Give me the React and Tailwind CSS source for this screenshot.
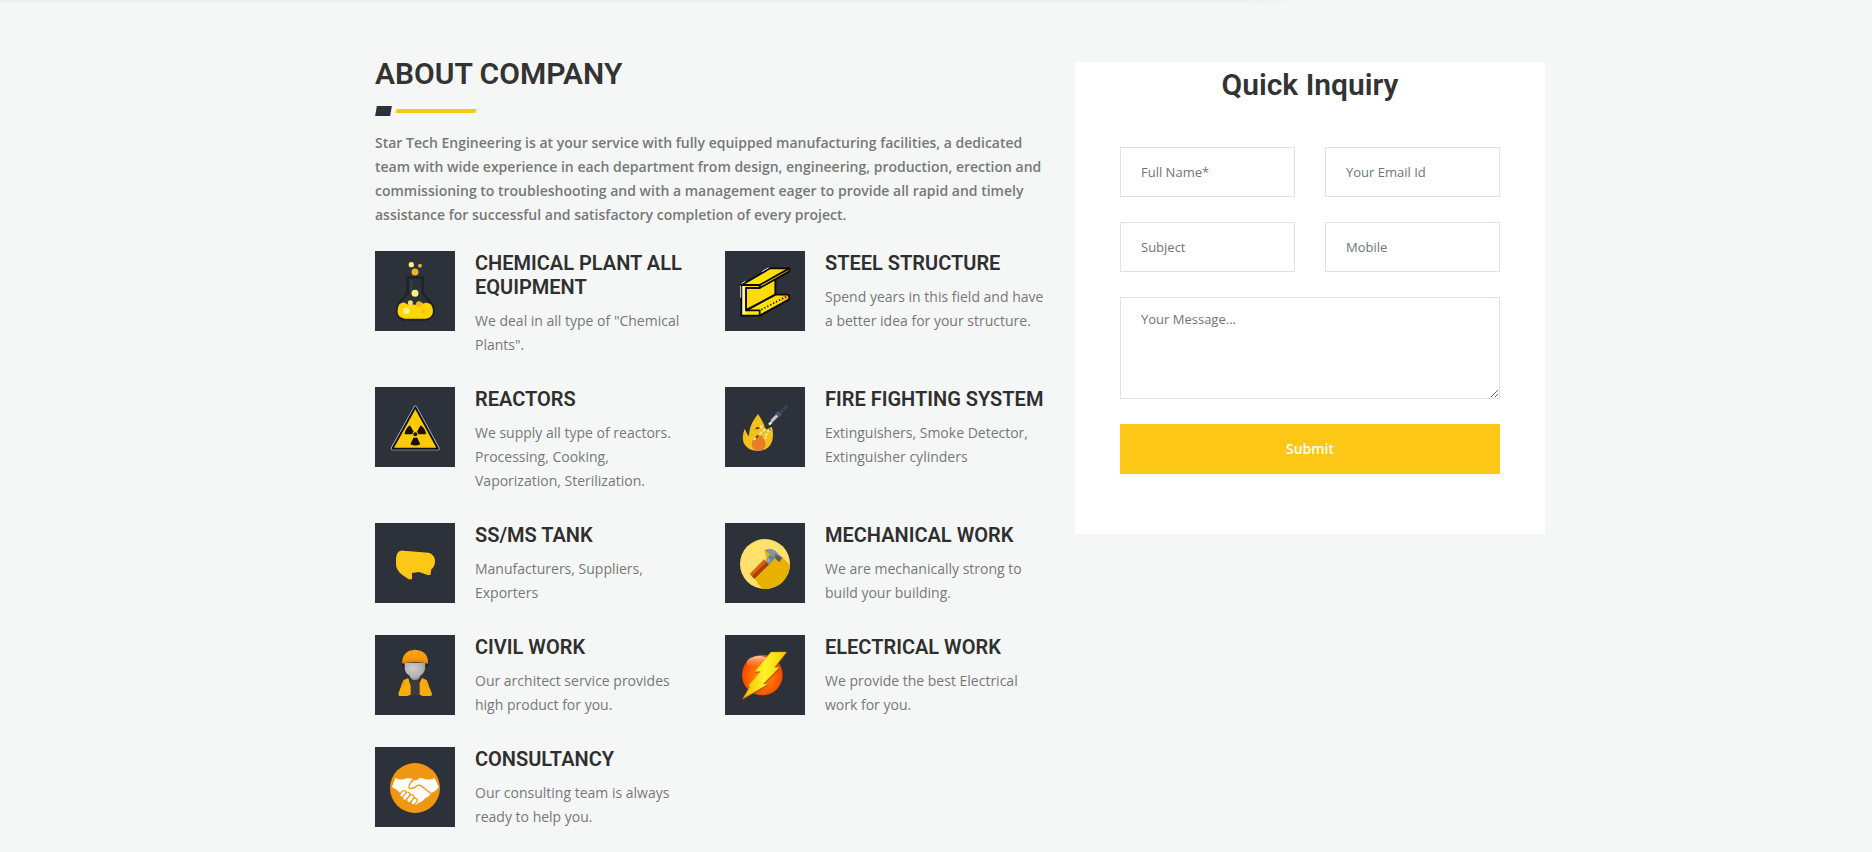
const Flask = () => (
  <svg viewBox="15 18 240 240" className="size-20">
    <path d="M113 98V144L84 180C76 200 82 222 104 224H166C190 222 196 200 188 180L158 144V98" fill="#2d3139" stroke="#202227" strokeWidth="7" />
    <path d="M108 98H163" stroke="#202227" strokeWidth="7" />
    <path d="M124 106V144" stroke="#3d4046" strokeWidth="5" />
    <path d="M88 178Q98 170 106 174Q114 182 124 178Q136 180 144 178Q152 168 160 176Q170 170 182 178C190 190 192 206 182 215Q174 221 166 221H104Q90 219 84 208Q80 194 88 178Z" fill="#fed500" />
    <circle cx="124" cy="59" r="8" fill="#fdee82" />
    <circle cx="150" cy="62" r="6" fill="#e9a62c" />
    <circle cx="135" cy="81" r="10.500" fill="#f2b32c" />
    <circle cx="135" cy="145" r="10.500" fill="#fdee82" />
    <circle cx="121" cy="173" r="7.500" fill="#f4e070" />
    <circle cx="147" cy="178" r="9" fill="#f2b32c" />
    <circle cx="109" cy="198" r="10" fill="#fdf08a" />
    <circle cx="160" cy="200" r="5" fill="#eeb718" />
  </svg>
);

const Beam = () => (
  <svg viewBox="15 18 240 240" className="size-20">
    <defs>
      <linearGradient id="beam" x1="0" x2="1" y1="0" y2="0">
        <stop offset="0" stopColor="#fff" />
        <stop offset=".12" stopColor="#ffe70d" />
        <stop offset=".8" stopColor="#fddb0a" />
        <stop offset="1" stopColor="#fb9a1c" />
      </linearGradient>
    </defs>
    <g stroke="#0b0b0b" strokeWidth="5.500" strokeLinejoin="round">
      <path d="M78 129L166 100V152L78 196Z" fill="#fddb0a" />
      <path d="M64 121L150 70H208V79L119 129V120H64Z" fill="url(#beam)" />
      <path d="M64 120H119V129H78V196L166 149H204Q209 152 208 163L119 212H64Z" fill="url(#beam)" />
      <path d="M119 212V196H78M119 120L208 70M78 196L166 149" fill="none" />
      <path d="M124 194L198 155" fill="none" strokeWidth="5" strokeDasharray="4 6" />
    </g>
    <path d="M62 122V158M65 116L76 109M126 80L146 68" stroke="#fff" strokeWidth="2.500" fill="none" />
  </svg>
);

const Radiation = () => (
  <svg viewBox="15 15 240 240" className="size-20">
    <path d="M136 76L204 200H67Z" fill="#fecb00" stroke="#d7d7d9" strokeWidth="10" strokeLinejoin="round" />
    <path d="M136 76L204 200H67Z" fill="#fecb00" stroke="#111" strokeWidth="6" strokeLinejoin="round" />
    <g fill="#141200">
      <circle cx="136" cy="157" r="6" />
      <path d="M127 157H104Q105 140 120 130L131 149Q127 152 127 157Z" />
      <path d="M145 157H168Q167 140 152 130L141 149Q145 152 145 157Z" />
      <path d="M131 166L121 187Q136 194 151 187L141 166Q136 169 131 166Z" />
    </g>
  </svg>
);

const Fire = () => (
  <svg viewBox="15 15 240 240" className="size-20">
    <path d="M114 96C128 116 134 132 138 142L156 135C162 158 160 182 145 196C126 212 92 210 78 193C64 178 68 157 74 141C79 149 82 160 87 162C88 132 100 115 114 96Z" fill="#f2c219" />
    <circle cx="116" cy="186" r="21" fill="#e67e25" />
    <path d="M106 170L113 161H128V172Z" fill="#e67e25" />
    <path d="M107 140L118 137M107 168L115 160" stroke="#4c4020" strokeWidth="5" />
    <path d="M133 133L152 145M133 124L151 133M146 120L139 143" stroke="#3c361d" strokeWidth="4" strokeDasharray="5 3" />
    <path d="M119 136L130 131M119 157L137 139M137 162L148 142M101 174L109 166M135 170L139 165" stroke="#eee9e4" strokeWidth="5" strokeDasharray="9 4" />
    <path d="M147 128L155 120" stroke="#f2f4f5" strokeWidth="7" />
    <path d="M154 118L172 100" stroke="#c3c6ca" strokeWidth="9" />
    <path d="M180 94L199 74" stroke="#34424f" strokeWidth="11" strokeLinecap="round" />
    <path d="M169 91L182 101" stroke="#4d5876" strokeWidth="11" />
  </svg>
);

const Tank = () => (
  <svg viewBox="15 15 240 240" className="size-20">
    <path d="M88 100Q94 97 101 98L176 104Q183 104 188 112Q196 119 195 133Q194 147 184 154L181 171H174L147 162L126 165V184H116L97 171Q80 158 78 141V120Q80 105 88 100Z" fill="#fcc716" />
  </svg>
);

const Hammer = () => (
  <svg viewBox="15 15 240 240" className="size-20">
    <defs>
      <clipPath id="disc"><circle cx="135" cy="138" r="75" /></clipPath>
    </defs>
    <circle cx="135" cy="138" r="75" fill="#ffe16b" />
    <path d="M102 180L142 134L134 97Q150 90 166 103L186 118L260 190L170 270Z" fill="#e8b100" clipPath="url(#disc)" />
    <path d="M132 97H152L160 108L146 112Q144 102 132 97Z" fill="#e8b100" />
    <path d="M132 124L148 139L103 182L89 168Z" fill="#dc6209" />
    <path d="M148 139L103 182L96 175L140 131Z" fill="#a83f05" />
    <path d="M152 108L170 115L145 141L137 127Z" fill="#6d8393" />
    <path d="M132 98Q148 87 166 98L187 119L178 132L168 123L170 116L160 114L151 113Q148 101 132 98Z" fill="#8496a0" />
    <path d="M166 105L171 111L175 113L187 119L178 132L166 122Z" fill="#635a5d" />
    <path d="M137 127L145 119L152 127L145 136Z" fill="#93a5b1" />
  </svg>
);

const Worker = () => (
  <svg viewBox="15 15 240 240" className="size-20">
    <defs>
      <radialGradient id="face" cx=".4" cy=".35" r=".75">
        <stop offset="0" stopColor="#cfcecd" />
        <stop offset=".6" stopColor="#b5b4b4" />
        <stop offset="1" stopColor="#858585" />
      </radialGradient>
      <linearGradient id="helmet" x1="0" x2="0" y1="0" y2="1">
        <stop offset="0" stopColor="#fdab16" />
        <stop offset="1" stopColor="#f18c08" />
      </linearGradient>
    </defs>
    <path d="M119 148H149L153 196H119Z" fill="#3c3c3d" />
    <path d="M97 94H173V109L165 116H104L97 107Z" fill="#17191d" />
    <path d="M104 98H166V114Q162 132 151 137Q149 149 135 150Q121 149 119 137Q105 130 104 114Z" fill="url(#face)" />
    <path d="M97 101C95 78 109 63 126 61Q135 57 144 61C164 63 176 80 174 101Q158 96 135 96Q112 96 97 101Z" fill="url(#helmet)" />
    <path d="M126 61L123 78M144 61L148 78" stroke="#d77c06" strokeWidth="1.500" />
    <path d="M97 97Q135 88 174 97" fill="none" stroke="#ce7908" strokeWidth="2" />
    <path d="M101 150L115 144L119 159L122 168V194L112 198H87L85 191L92 172Z" fill="#fbac0a" />
    <path d="M170 150L156 144L149 159V194L158 198H184L186 191L178 172Z" fill="#fbac0a" />
    <path d="M94 172V164L101 151L104 150V169Z" fill="#f0a00c" />
    <path d="M176 172V164L170 151L166 150V169Z" fill="#f0a00c" />
  </svg>
);

const Bolt = () => (
  <svg viewBox="15 15 240 240" className="size-20">
    <defs>
      <radialGradient id="orb" cx=".5" cy=".55" r=".55">
        <stop offset="0" stopColor="#ff9a00" />
        <stop offset=".55" stopColor="#ff6900" />
        <stop offset="1" stopColor="#f33f00" />
      </radialGradient>
      <linearGradient id="gloss" x1="0" x2="0" y1="0" y2="1">
        <stop offset="0" stopColor="#ffe0c8" stopOpacity=".9" />
        <stop offset="1" stopColor="#ff7a20" stopOpacity="0" />
      </linearGradient>
      <linearGradient id="bolt" x1="0" x2="1" y1="0" y2="0">
        <stop offset="0" stopColor="#f5b800" />
        <stop offset=".5" stopColor="#fff32a" />
        <stop offset="1" stopColor="#f5cf00" />
      </linearGradient>
    </defs>
    <circle cx="127" cy="135" r="61" fill="url(#orb)" />
    <ellipse cx="118" cy="98" rx="38" ry="20" fill="url(#gloss)" />
    <path d="M156 69H202L166 115H181L132 165H147L70 210L92 172H85L121 128H105Z" fill="#873300" opacity=".55" />
    <path d="M153 66H200L164 112H179L130 162H145L68 207L90 169H83L120 125H103Z" fill="url(#bolt)" stroke="#ce7d00" strokeWidth="1.500" />
  </svg>
);

const Handshake = () => (
  <svg viewBox="15 15 240 240" className="size-20">
    <circle cx="135" cy="138" r="75" fill="#f09712" />
    <path d="M76 108Q92 117 112 108Q124 109 135 113Q150 105 162 110Q180 116 194 108L206 134Q198 148 183 153Q178 165 166 168Q156 181 146 182Q136 192 126 187L92 156Q88 147 66 135Z" fill="#fff" />
    <path d="M144 111Q131 110 123 120Q115 134 117 138Q124 143 139 133Q145 127 153 131L181 153" fill="none" stroke="#f09712" strokeWidth="4" strokeLinecap="round" />
    <g fill="#fff" stroke="#f09712" strokeWidth="3.500">
      <rect x="92" y="145" width="14" height="22" rx="7" transform="rotate(40 99 156)" />
      <rect x="102" y="149" width="14" height="27" rx="7" transform="rotate(40 109 162)" />
      <rect x="114" y="157" width="14" height="26" rx="7" transform="rotate(40 121 170)" />
      <rect x="126" y="167" width="13" height="22" rx="6.500" transform="rotate(35 132 178)" />
    </g>
  </svg>
);

const services = [
  { icon: Flask, title: "CHEMICAL PLANT ALL EQUIPMENT", text: 'We deal in all type of "Chemical Plants".' },
  { icon: Beam, title: "STEEL STRUCTURE", text: "Spend years in this field and have a better idea for your structure." },
  { icon: Radiation, title: "REACTORS", text: "We supply all type of reactors. Processing, Cooking, Vaporization, Sterilization." },
  { icon: Fire, title: "FIRE FIGHTING SYSTEM", text: "Extinguishers, Smoke Detector, Extinguisher cylinders" },
  { icon: Tank, title: "SS/MS TANK", text: "Manufacturers, Suppliers, Exporters" },
  { icon: Hammer, title: "MECHANICAL WORK", text: "We are mechanically strong to build your building." },
  { icon: Worker, title: "CIVIL WORK", text: "Our architect service provides high product for you." },
  { icon: Bolt, title: "ELECTRICAL WORK", text: "We provide the best Electrical work for you." },
  { icon: Handshake, title: "CONSULTANCY", text: "Our consulting team is always ready to help you." },
];

const Service = ({ icon: Icon, title, text }) => (
  <div className="flex items-start gap-5">
    <div className="size-20 shrink-0 bg-[#2d3139]">
      <Icon />
    </div>
    <div className="min-w-0 flex-1">
      <h3 className="mb-2.5 -mr-1 font-['Roboto',sans-serif] text-[20px] leading-6 font-semibold text-[#2f2f2f]">{title}</h3>
      <p className="text-sm leading-6">{text}</p>
    </div>
  </div>
);

const field =
  "block w-full rounded-none border border-[#dfe3e7] bg-white px-5 text-[13px] text-[#495057] placeholder:text-[#6c757d] outline-none";

export default function App() {
  return (
    <div className="h-[852px] overflow-hidden bg-[#f5f7f6] font-['Open_Sans',sans-serif] text-[#777]">
      <div className="h-[3px] w-[1310px] bg-linear-to-r from-[#eff1f0] from-95% to-[#f5f7f6]" />
      <main className="ml-[375px] flex w-[1170px] items-start justify-between pt-[53px]">
        <section className="w-[670px]">
          <h2 className="font-['Roboto',sans-serif] text-[30px] leading-9 font-semibold text-[#333]">ABOUT COMPANY</h2>
          <div className="mt-[14px] flex items-center gap-[5px] pl-px">
            <span className="h-2.5 w-[15px] -skew-x-10 bg-[#2d3139]" />
            <span className="h-1 w-20 -skew-x-20 bg-[#fcc716]" />
          </div>
          <p className="mt-[15px] text-sm leading-6 font-semibold">
            Star Tech Engineering is at your service with fully equipped manufacturing facilities, a dedicated team with
            wide experience in each department from design, engineering, production, erection and commissioning to
            troubleshooting and with a management eager to provide all rapid and timely assistance for successful and
            satisfactory completion of every project.
          </p>
          <div className="mt-6 grid grid-cols-2 gap-[30px]">
            {services.map((s) => (
              <Service key={s.title} {...s} />
            ))}
          </div>
        </section>
        <aside className="mt-1.5 h-[472px] w-[470px] bg-white px-[45px] pt-[5px]">
          <h2 className="text-center font-['Roboto',sans-serif] text-[30px] leading-9 font-semibold text-[#333]">
            Quick Inquiry
          </h2>
          <form className="mt-11 grid grid-cols-2 gap-x-[30px] gap-y-[25px]">
            <input className={`${field} h-[50px]`} placeholder="Full Name*" />
            <input className={`${field} h-[50px]`} placeholder="Your Email Id" />
            <input className={`${field} h-[50px]`} placeholder="Subject" />
            <input className={`${field} h-[50px]`} placeholder="Mobile" />
            <textarea className={`${field} col-span-2 h-[102px] resize py-[11px] leading-5`} placeholder="Your Message..." />
            <button type="button" className="col-span-2 h-[50px] bg-[#fcc716] text-sm font-semibold text-white">
              Submit
            </button>
          </form>
        </aside>
      </main>
    </div>
  );
}
